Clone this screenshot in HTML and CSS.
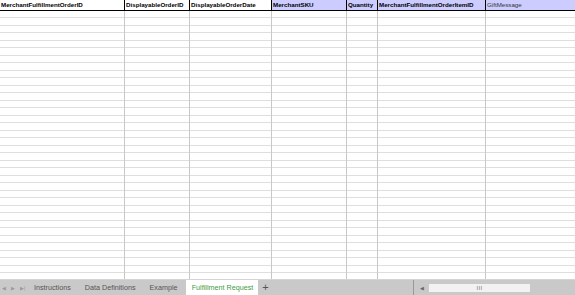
FILE: index.html
```html
<!DOCTYPE html>
<html lang="en">
<head>
    <meta charset="UTF-8">
    <title>Fulfillment Request</title>
    <link rel="stylesheet" href="styles.css">
</head>
<body>
    <div class="sheet">
        <div class="grid">
            <div class="col c1">
                <div class="head">MerchantFulfillmentOrderID</div>
                <div class="cells"></div>
            </div>
            <div class="col c2">
                <div class="head">DisplayableOrderID</div>
                <div class="cells"></div>
            </div>
            <div class="col c3">
                <div class="head">DisplayableOrderDate</div>
                <div class="cells"></div>
            </div>
            <div class="col c4">
                <div class="head optional">MerchantSKU</div>
                <div class="cells"></div>
            </div>
            <div class="col c5">
                <div class="head optional">Quantity</div>
                <div class="cells"></div>
            </div>
            <div class="col c6">
                <div class="head optional">MerchantFulfillmentOrderItemID</div>
                <div class="cells"></div>
            </div>
            <div class="col c7">
                <div class="head optional plain">GiftMessage</div>
                <div class="cells"></div>
            </div>
        </div>

        <div class="tabbar">
            <div class="nav-arrows">
                <span>&#9664;</span>
                <span>&#9654;</span>
                <span>&#9654;|</span>
            </div>
            <div class="tab">Instructions</div>
            <div class="tab">Data Definitions</div>
            <div class="tab">Example</div>
            <div class="tab active">Fulfillment Request</div>
            <div class="add-tab">+</div>
            <div class="spacer"></div>
            <div class="hscroll">
                <span class="scroll-left">&#9664;</span>
                <div class="track">
                    <span class="grip">III</span>
                </div>
            </div>
        </div>
    </div>
</body>
</html>
```

FILE: styles.css
```css
* {
    margin: 0;
    padding: 0;
    box-sizing: border-box;
}

body {
    background-color: #ffffff;
    font-family: 'Liberation Sans', Arial, sans-serif;
    color: #000000;
    width: 575px;
    height: 295px;
    overflow: hidden;
}

.sheet {
    display: flex;
    flex-direction: column;
    height: 295px;
}

.grid {
    display: flex;
    height: 280px;
    border-bottom: 1px solid #d4d4d4;
}

.col {
    display: flex;
    flex-direction: column;
    border-right: 1px solid #c8c8c8;
}

.c1 { width: 125px; }
.c2 { width: 65px; }
.c3 { width: 82px; }
.c4 { width: 75px; }
.c5 { width: 31px; }
.c6 { width: 108px; }
.c7 { flex: 1; border-right: none; }

.head {
    height: 11px;
    line-height: 10px;
    font-size: 6.2px;
    font-weight: bold;
    padding-left: 1px;
    white-space: nowrap;
    overflow: hidden;
    border-bottom: 1px solid #000000;
    margin-right: -1px;
    border-right: 1px solid #000000;
}

.c7 .head {
    margin-right: 0;
    border-right: none;
}

.head.optional {
    background-color: #ccccff;
}

.head.plain {
    font-weight: normal;
    color: #333333;
}

.cells {
    flex: 1;
    background-image: repeating-linear-gradient(
        to bottom,
        transparent 0,
        transparent 6.5px,
        #dedede 6.5px,
        #dedede 7.5px
    );
}

.tabbar {
    display: flex;
    align-items: center;
    height: 15px;
    background-color: #c9c9c9;
    font-size: 7.2px;
    color: #555555;
}

.nav-arrows {
    display: flex;
    gap: 5px;
    width: 27px;
    padding-left: 2px;
    font-size: 5px;
    color: #9a9a9a;
}

.tab {
    padding: 0 7px;
    line-height: 15px;
    height: 15px;
    white-space: nowrap;
}

.tab.active {
    background-color: #ffffff;
    color: #3f9a3f;
    width: 72px;
    margin-left: 2px;
    padding: 0;
    text-align: center;
}

.add-tab {
    width: 14px;
    text-align: center;
    font-size: 11px;
    color: #555555;
    line-height: 15px;
}

.spacer {
    flex: 1;
}

.hscroll {
    display: flex;
    align-items: center;
    width: 162px;
    height: 15px;
    border-left: 1px solid #999999;
}

.scroll-left {
    width: 15px;
    text-align: center;
    font-size: 5px;
    color: #666666;
}

.track {
    width: 101px;
    height: 8px;
    background-color: #f2f2f2;
    display: flex;
    justify-content: center;
    align-items: center;
}

.grip {
    font-size: 6px;
    color: #777777;
    letter-spacing: 0.3px;
}
```
